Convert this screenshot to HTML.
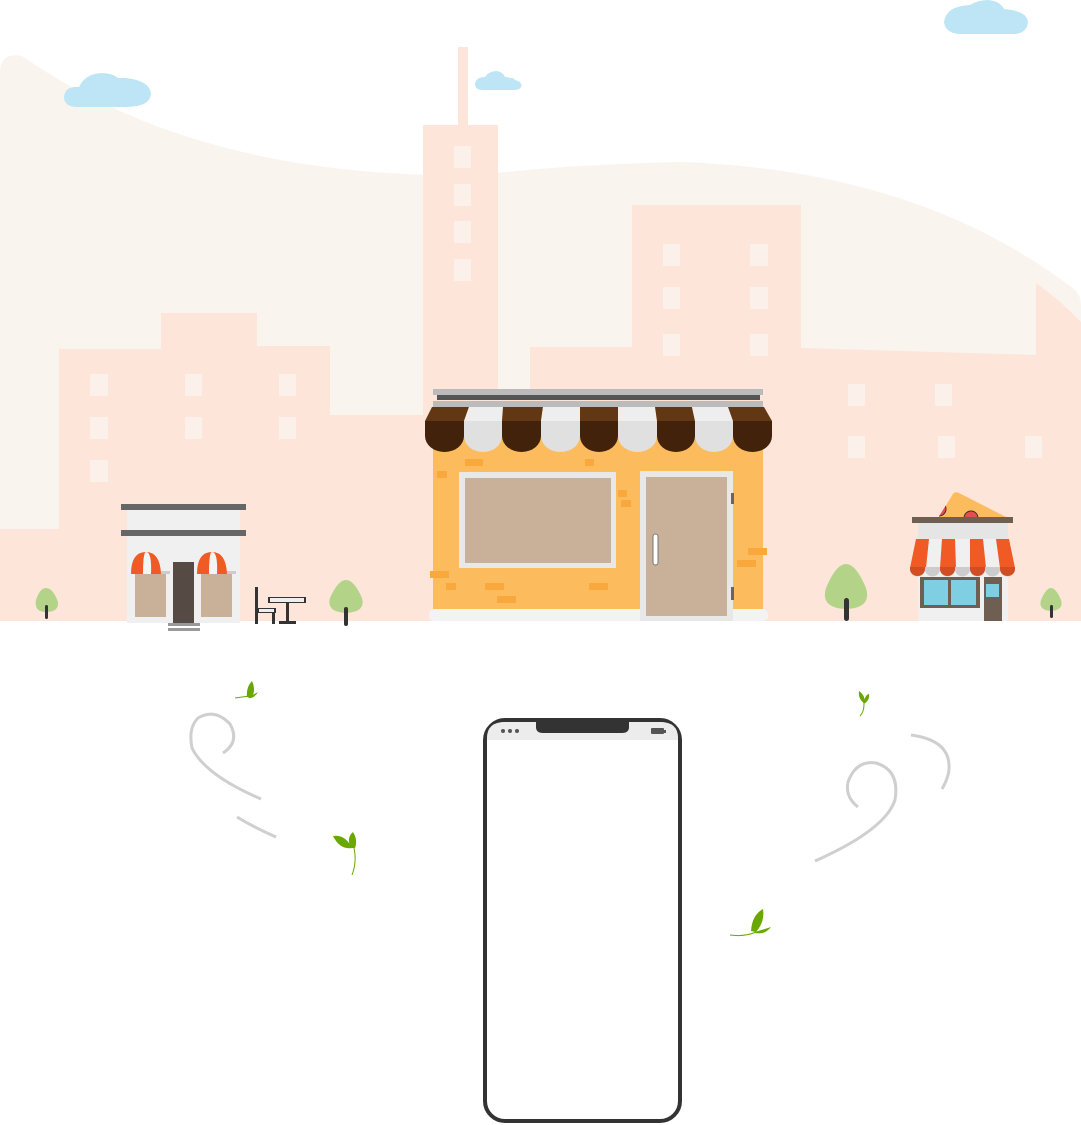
<!DOCTYPE html>
<html><head><meta charset="utf-8"><style>html,body{margin:0;padding:0;background:#fff;width:1081px;height:1125px;overflow:hidden}svg{display:block}</style></head><body>
<svg width="1081" height="1125" viewBox="0 0 1081 1125" xmlns="http://www.w3.org/2000/svg">
<defs><clipPath id="pz"><path d="M938 518 L953 494 Q955 491 959 493 L1008 518 Z"/></clipPath></defs>
<path d="M0 72 Q0 52 22 56 Q200 180 480 175 Q560 165 680 162 Q920 170 1075 290 Q1081 296 1081 305 L1081 621 L0 621 Z" fill="#faf4ee"/>
<g fill="#fde5d9">
<rect x="0" y="529" width="60" height="92"/>
<rect x="59" y="349" width="102" height="272"/>
<rect x="161" y="313" width="96" height="308"/>
<rect x="257" y="346" width="73" height="275"/>
<rect x="330" y="415" width="100" height="206"/>
<rect x="423" y="125" width="75" height="496"/>
<rect x="458" y="47" width="10" height="80"/>
<rect x="498" y="389" width="40" height="232"/>
<rect x="530" y="347" width="102" height="274"/>
<rect x="632" y="205" width="169" height="416"/>
<path d="M801 348 L1036 355 L1036 283 Q1060 300 1081 322 L1081 621 L801 621 Z"/>
</g>
<g fill="#fbf0ea">
<rect x="90" y="374" width="18" height="22"/><rect x="185" y="374" width="17" height="22"/><rect x="279" y="374" width="17" height="22"/>
<rect x="90" y="417" width="18" height="22"/><rect x="185" y="417" width="17" height="22"/><rect x="279" y="417" width="17" height="22"/>
<rect x="90" y="460" width="18" height="22"/>
<rect x="454" y="146" width="17" height="22"/><rect x="454" y="184" width="17" height="22"/><rect x="454" y="221" width="17" height="22"/><rect x="454" y="259" width="17" height="22"/>
<rect x="663" y="244" width="17" height="22"/><rect x="750" y="244" width="18" height="22"/>
<rect x="663" y="287" width="17" height="22"/><rect x="750" y="287" width="18" height="22"/>
<rect x="663" y="334" width="17" height="22"/><rect x="750" y="334" width="18" height="22"/>
<rect x="848" y="384" width="17" height="22"/><rect x="935" y="384" width="17" height="22"/>
<rect x="848" y="436" width="17" height="22"/><rect x="938" y="436" width="17" height="22"/><rect x="1025" y="436" width="17" height="22"/>
</g>
<g fill="#bee5f5">
<path d="M78 107 Q64 107 64 97 Q65 86 79 87 Q85 74 101 73 Q112 73 118 78 L124 78 Q150 80 151 94 Q150 107 125 107 Z"/>
<path d="M483 90 Q475 90 475 84 Q476 77 485 77 Q489 71 497 71 Q503 72 505 77 Q515 78 515 80 Q523 82 521 87 Q520 90 513 90 Z"/>
<path d="M958 34 Q945 32 944 22 Q946 6 970 5 Q978 0 988 0 Q1000 1 1004 9 Q1027 11 1028 22 Q1027 33 1015 34 Z"/>
</g>
<rect x="127" y="508" width="113" height="115" fill="#eff0ef"/>
<rect x="121" y="504" width="125" height="6" fill="#666"/>
<rect x="121" y="530" width="125" height="6" fill="#666"/>
<rect x="173" y="562" width="21" height="61" fill="#554a44"/>
<rect x="135" y="573" width="31" height="44" fill="#c9b099"/>
<rect x="201" y="573" width="31" height="44" fill="#c9b099"/>
<rect x="132" y="571" width="38" height="3" fill="#ccc"/><rect x="198" y="571" width="38" height="3" fill="#ccc"/>
<path d="M131 574 Q131 552 146 552 Q160 552 161 574 Z" fill="#f05a24"/>
<path d="M143 574 Q143 552 146 552 Q152 552 151 574 Z" fill="#f4f4f4"/>
<path d="M197 574 Q197 552 212 552 Q226 552 227 574 Z" fill="#f05a24"/>
<path d="M209 574 Q209 552 212 552 Q218 552 217 574 Z" fill="#f4f4f4"/>
<rect x="168" y="623" width="32" height="3" fill="#999"/><rect x="168" y="628" width="32" height="3" fill="#999"/>
<g fill="#333"><rect x="255" y="587" width="3" height="37"/><rect x="256" y="608" width="20" height="5"/><rect x="272" y="608" width="3" height="16"/><rect x="268" y="597" width="38" height="6"/><rect x="286" y="602" width="3" height="21"/><rect x="279" y="621" width="17" height="3"/></g>
<rect x="259" y="609" width="15" height="3" fill="#eee"/><rect x="270" y="598" width="34" height="4" fill="#eee"/>
<g fill="#b3d488">
<path d="M46 588 Q40 588 36 600 Q34 612 46 612 Q59 612 58 602 Q53 588 46 588Z"/>
<path d="M346 580 Q338 580 330 598 Q326 612 346 613 Q366 612 362 598 Q354 580 346 580Z"/>
<path d="M846 564 Q836 564 826 588 Q820 608 846 609 Q872 608 866 588 Q856 564 846 564Z"/>
<path d="M1051 588 Q1046 588 1041 600 Q1038 610 1051 611 Q1064 610 1061 600 Q1056 588 1051 588Z"/>
</g>
<g fill="#333"><rect x="45" y="605" width="3" height="14" rx="1.5"/><rect x="344" y="607" width="4" height="19" rx="2"/><rect x="844" y="598" width="5" height="23" rx="2.5"/><rect x="1050" y="605" width="3" height="13" rx="1.5"/></g>
<rect x="433" y="415" width="330" height="206" fill="#fcbc5e"/>
<g fill="#f9a83d">
<rect x="465" y="459" width="18" height="7"/><rect x="437" y="471" width="10" height="7"/><rect x="585" y="459" width="9" height="7"/><rect x="618" y="490" width="9" height="7"/><rect x="621" y="500" width="10" height="7"/><rect x="748" y="548" width="19" height="7"/><rect x="737" y="560" width="19" height="7"/><rect x="430" y="571" width="19" height="7"/><rect x="446" y="583" width="10" height="7"/><rect x="485" y="583" width="19" height="7"/><rect x="497" y="596" width="19" height="7"/><rect x="589" y="583" width="19" height="7"/></g>
<rect x="429" y="609" width="339" height="12" rx="5" fill="#f3f3f3"/>
<rect x="459" y="472" width="157" height="96" fill="#e8e8e8"/>
<rect x="465" y="478" width="146" height="85" fill="#c9b099"/>
<rect x="640" y="471" width="93" height="150" fill="#e8e8e8"/>
<rect x="646" y="477" width="81" height="139" fill="#c9b099"/>
<rect x="653" y="534" width="5" height="31" rx="2.5" fill="#fff" stroke="#777" stroke-width="1"/>
<rect x="731" y="493" width="3" height="11" fill="#666"/><rect x="731" y="587" width="3" height="13" fill="#666"/>
<rect x="433" y="389" width="330" height="6" fill="#bbb"/>
<rect x="437" y="395" width="323" height="5" fill="#555"/>
<rect x="433" y="401" width="330" height="6" fill="#bbb"/>
<g>
<path d="M432 407 L469 407 L464 421 L425 421 Z" fill="#613714"/><path d="M425 421 L464 421 L464 436 A19.5 16 0 0 1 425 436 Z" fill="#43220b"/>
<path d="M469 407 L503 407 L502 421 L464 421 Z" fill="#eee"/><path d="M464 421 L502 421 L502 436 A19 16 0 0 1 464 436 Z" fill="#e0e0e0"/>
<path d="M503 407 L543 407 L541 421 L502 421 Z" fill="#613714"/><path d="M502 421 L541 421 L541 436 A19.5 16 0 0 1 502 436 Z" fill="#43220b"/>
<path d="M543 407 L580 407 L580 421 L541 421 Z" fill="#eee"/><path d="M541 421 L580 421 L580 436 A19.5 16 0 0 1 541 436 Z" fill="#e0e0e0"/>
<path d="M580 407 L618 407 L618 421 L580 421 Z" fill="#613714"/><path d="M580 421 L618 421 L618 436 A19 16 0 0 1 580 436 Z" fill="#43220b"/>
<path d="M618 407 L655 407 L657 421 L618 421 Z" fill="#eee"/><path d="M618 421 L657 421 L657 436 A19.5 16 0 0 1 618 436 Z" fill="#e0e0e0"/>
<path d="M655 407 L692 407 L695 421 L657 421 Z" fill="#613714"/><path d="M657 421 L695 421 L695 436 A19 16 0 0 1 657 436 Z" fill="#43220b"/>
<path d="M692 407 L728 407 L733 421 L695 421 Z" fill="#eee"/><path d="M695 421 L733 421 L733 436 A19 16 0 0 1 695 436 Z" fill="#e0e0e0"/>
<path d="M728 407 L764 407 L772 421 L733 421 Z" fill="#613714"/><path d="M733 421 L772 421 L772 436 A19.5 16 0 0 1 733 436 Z" fill="#43220b"/>
</g>
<path d="M938 518 L953 494 Q955 491 959 493 L1008 518 Z" fill="#fcbc5e"/>
<g clip-path="url(#pz)">
<circle cx="939" cy="509" r="7" fill="#e84c4c" stroke="#333" stroke-width="1"/>
<circle cx="971" cy="518" r="7" fill="#e84c4c" stroke="#333" stroke-width="1"/>
</g>
<rect x="918" y="522" width="90" height="99" fill="#eff0ef"/>
<rect x="918" y="522" width="90" height="18" fill="#e5e5e5"/>
<rect x="912" y="517" width="101" height="6" fill="#6e5f52"/>
<path d="M916 539 L1009 539 L1015 568 L910 568 Z" fill="#eff0ef"/>
<g fill="#f05a24">
<path d="M916 539 L929 539 L926 568 L910 568 Z"/><path d="M942 539 L955 539 L956 568 L940 568 Z"/><path d="M970 539 L983 539 L986 568 L970 568 Z"/><path d="M996 539 L1009 539 L1015 568 L1000 568 Z"/></g>
<path d="M910 567 L1015 567 L1015 569 A7 7 0 0 1 1000 569 A7 7 0 0 1 985 569 A7 7 0 0 1 970 569 A7 7 0 0 1 955 569 A7 7 0 0 1 940 569 A7 7 0 0 1 925 569 A7 7 0 0 1 910 569 Z" fill="#ccc"/>
<path d="M910 567 L925 567 L925 569 A7.5 7 0 0 1 910 569Z M940 567 L955 567 L955 569 A7.5 7 0 0 1 940 569Z M970 567 L985 567 L985 569 A7.5 7 0 0 1 970 569Z M1000 567 L1015 567 L1015 569 A7.5 7 0 0 1 1000 569Z" fill="#d24e22"/>
<rect x="920" y="577" width="60" height="31" fill="#6e5f52"/>
<rect x="924" y="580" width="24" height="25" fill="#7fcfe3"/><rect x="951" y="580" width="25" height="25" fill="#7fcfe3"/>
<rect x="984" y="577" width="18" height="44" fill="#6e5f52"/>
<rect x="986" y="584" width="13" height="13" fill="#7fcfe3"/>
<g fill="none" stroke="#cfcfcf" stroke-width="3" stroke-linecap="butt">
<path d="M223 753 Q240 742 230 724 Q215 708 198 718 Q188 728 192 748 Q205 775 261 799"/>
<path d="M237 817 Q255 828 276 837"/>
<path d="M858 807 Q845 797 848 782 Q856 760 876 763 Q900 770 895 800 Q885 830 815 861"/>
<path d="M911 735 Q948 740 949 765 Q950 775 942 789"/>
</g>
<g fill="#6aa800">
<path d="M247 697 Q246 687 252 681 Q256 690 252 697 Z"/><path d="M249 697 L258 692 Q254 699 248 698Z"/>
<path d="M333 836 Q345 834 352 848 Q340 850 333 836Z"/><path d="M351 848 Q346 838 353 832 Q358 840 355 848Z"/>
<path d="M859 691 Q866 696 864 703 Q858 699 859 691Z"/><path d="M863 703 Q866 694 869 694 Q870 700 864 704Z"/>
<path d="M751 931 Q752 915 763 909 Q765 922 756 932Z"/><path d="M755 932 L771 927 Q765 935 755 933Z"/>
</g>
<g fill="none" stroke="#6aa800" stroke-width="1">
<path d="M235 698 Q242 697 250 696"/><path d="M354 848 Q357 862 352 875"/><path d="M864 704 Q864 712 860 716"/><path d="M730 935 Q745 937 756 932"/>
</g>
<rect x="485" y="720" width="195" height="401" rx="20" fill="#fff" stroke="#333" stroke-width="4"/>
<path d="M487 740 L487 738 Q487 722 505 722 L660 722 Q678 722 678 738 L678 740 Z" fill="#ececec"/>
<path d="M536 718 L629 718 L629 727 Q629 733 622 733 L543 733 Q536 733 536 727 Z" fill="#333"/>
<g fill="#555"><circle cx="503" cy="731" r="2"/><circle cx="510" cy="731" r="2"/><circle cx="517" cy="731" r="2"/></g>
<rect x="651" y="728" width="13" height="6" rx="1" fill="#555"/><rect x="664" y="730" width="2" height="3" fill="#555"/>
</svg>
</body></html>
